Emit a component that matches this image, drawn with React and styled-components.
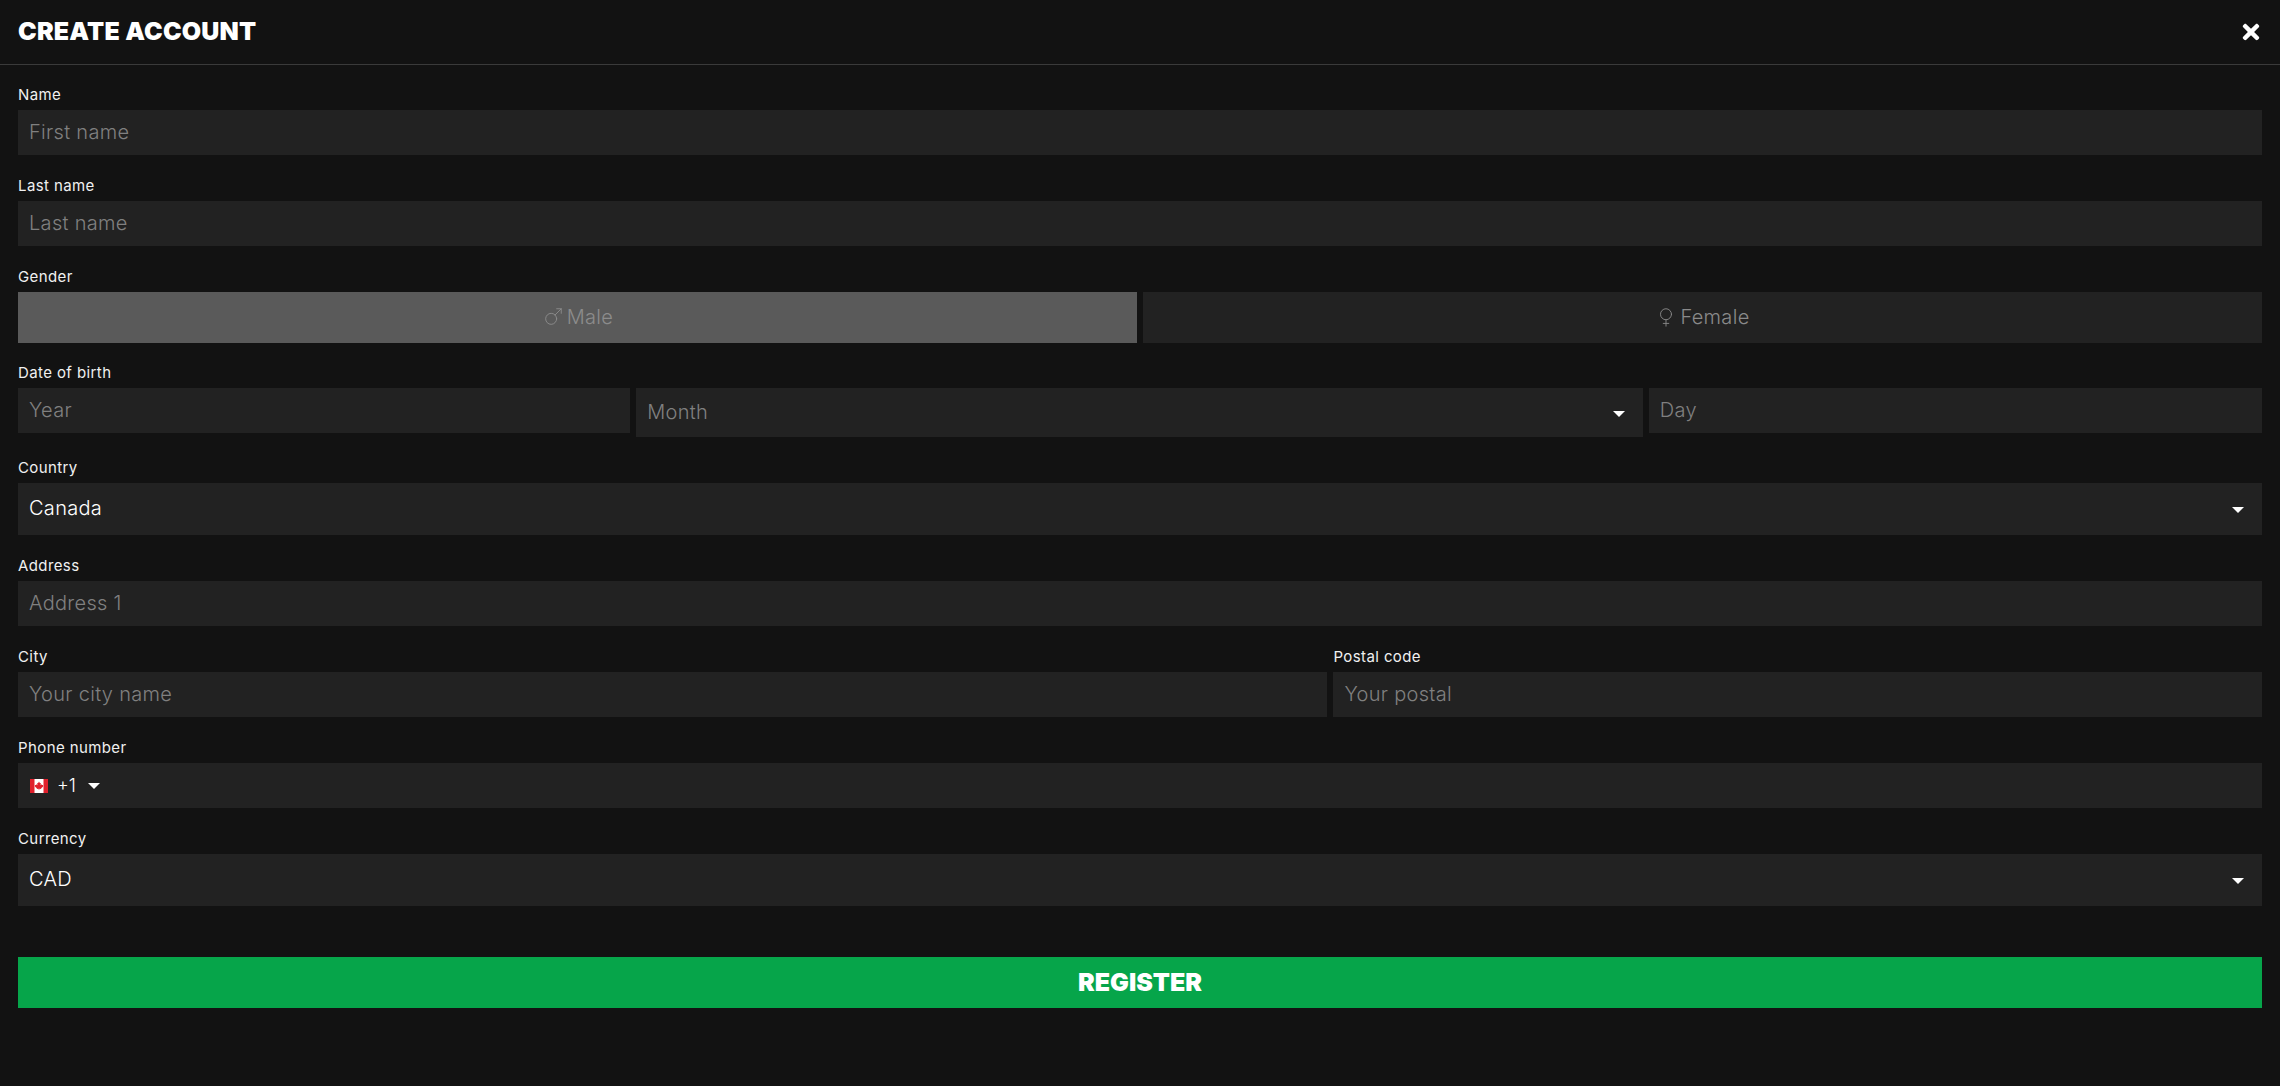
import { Mars, Venus } from "lucide-react";
import { FaTimes } from "react-icons/fa";
import styled, { createGlobalStyle } from "styled-components";

const GlobalStyle = createGlobalStyle`
  html, body {
    margin: 0;
    background: #121212;
    font-family: Inter, "Open Sans", sans-serif;
  }
  * {
    box-sizing: border-box;
  }
`;

const Page = styled.div`
  min-height: 1086px;
  background: #121212;
  color: #fff;
`;

const Header = styled.header`
  height: 65px;
  padding: 0 18px;
  display: flex;
  align-items: center;
  justify-content: space-between;
  border-bottom: 1px solid #3a3a3a;
`;

const Title = styled.h1`
  margin: 0 0 1px;
  font-size: 25px;
  font-weight: 900;
  line-height: 1;
  letter-spacing: 0.2px;
  text-transform: uppercase;
`;

const Close = styled.button`
  padding: 0;
  margin: 0 -1px 1px 0;
  border: 0;
  background: none;
  color: #fff;
  display: flex;
  font-size: 24px;
`;

const Form = styled.form`
  padding: 21px 18px 0;
`;

const Row = styled.div`
  display: flex;
  gap: 6px;
  align-items: flex-start;
`;

const Field = styled.div`
  flex: ${(props) => props.$flex || 1} 1 0;
  min-width: 0;
  margin-bottom: ${(props) => props.$gap || 22}px;
`;

const Label = styled.label`
  display: block;
  height: 16px;
  margin-bottom: 8px;
  font-size: 15px;
  font-weight: 400;
  line-height: 18px;
  letter-spacing: 0.4px;
  color: #f0f0f0;
`;

const Input = styled.input`
  display: block;
  width: 100%;
  height: 45px;
  padding: 0 10px 1px 11px;
  border: 0;
  outline: 0;
  background: #222;
  color: #fff;
  font-family: inherit;
  font-size: 20px;
  font-weight: 300;
  letter-spacing: 0.3px;
  &::placeholder {
    color: #808080;
    opacity: 1;
  }
`;

const SelectWrap = styled.div`
  position: relative;
`;

const Select = styled.select`
  display: block;
  width: 100%;
  height: ${(props) => props.$height}px;
  padding: 0 10px 2px 11px;
  border: 0;
  outline: 0;
  appearance: none;
  background: #222;
  color: ${(props) => (props.$muted ? "#808080" : "#fff")};
  font-family: inherit;
  font-size: 20px;
  font-weight: 300;
  letter-spacing: 0.3px;
`;

const Caret = styled.span`
  width: 0;
  height: 0;
  border-left: 6px solid transparent;
  border-right: 6px solid transparent;
  border-top: 6px solid #fff;
  ${(props) =>
    props.$overlay &&
    `
    position: absolute;
    right: 18px;
    top: 50%;
    margin-top: -2px;
    pointer-events: none;
  `}
`;

const GenderGroup = styled.div`
  display: flex;
  gap: 6px;
`;

const GenderButton = styled.button`
  flex: 1;
  height: 51px;
  padding: 0 0 1px;
  border: 0;
  background: ${(props) => (props.$active ? "#5a5a5a" : "#222")};
  color: ${(props) => (props.$active ? "#8c8c8c" : "#8a8a8a")};
  display: flex;
  align-items: center;
  justify-content: center;
  gap: 3px;
  font-family: inherit;
  font-size: 20px;
  font-weight: 300;
  letter-spacing: 0.3px;
`;

const PhoneBox = styled.div`
  height: 45px;
  padding: 0 12px;
  background: #222;
  display: flex;
  align-items: center;
`;

const Flag = styled.svg`
  width: 18px;
  height: 14px;
  margin-right: 9px;
`;

const DialCode = styled.span`
  margin-right: 12px;
  font-size: 18px;
  font-weight: 300;
`;

const Register = styled.button`
  display: block;
  width: 100%;
  height: 51px;
  margin-top: 51px;
  padding: 0 0 2px;
  border: 0;
  background: #06a54a;
  color: #fff;
  font-family: inherit;
  font-size: 25px;
  font-weight: 900;
  text-transform: uppercase;
`;

const CanadaFlag = () => (
  <Flag viewBox="0 0 18 14">
    <rect width="18" height="14" rx="1" fill="#fff" />
    <rect width="4.5" height="14" fill="#e0202c" />
    <rect x="13.5" width="4.5" height="14" fill="#e0202c" />
    <path
      d="M9 2.6l1 1.7.9-.4-.4 2.3 1.2-.9.3.8 1.2-.2-.4 1.3.5.3-2.2 1.7.2.8-2-.2V11h-.6V9.800l-2 .2.2-.8L4.700 7.500l.5-.3-.4-1.300 1.200.2.300-.8 1.200.9-.4-2.300.9.4z"
      fill="#e0202c"
    />
  </Flag>
);

const TextField = ({ label, placeholder, flex }) => (
  <Field $flex={flex}>
    <Label>{label}</Label>
    <Input placeholder={placeholder} />
  </Field>
);

const App = () => {
  return (
    <Page>
      <GlobalStyle />
      <Header>
        <Title>Create account</Title>
        <Close type="button" aria-label="Close">
          <FaTimes />
        </Close>
      </Header>
      <Form>
        <TextField label="Name" placeholder="First name" />
        <TextField label="Last name" placeholder="Last name" />
        <Field $gap={21}>
          <Label>Gender</Label>
          <GenderGroup>
            <GenderButton type="button" $active>
              <Mars size={22} strokeWidth={1} />
              Male
            </GenderButton>
            <GenderButton type="button">
              <Venus size={22} strokeWidth={1} />
              Female
            </GenderButton>
          </GenderGroup>
        </Field>
        <Row>
          <Field $flex={612}>
            <Label>Date of birth</Label>
            <Input placeholder="Year" />
          </Field>
          <Field $flex={1006}>
            <Label>&nbsp;</Label>
            <SelectWrap>
              <Select $height={49} $muted defaultValue="">
                <option value="">Month</option>
              </Select>
              <Caret $overlay />
            </SelectWrap>
          </Field>
          <Field $flex={613}>
            <Label>&nbsp;</Label>
            <Input placeholder="Day" />
          </Field>
        </Row>
        <Field>
          <Label>Country</Label>
          <SelectWrap>
            <Select $height={52}>
              <option>Canada</option>
            </Select>
            <Caret $overlay />
          </SelectWrap>
        </Field>
        <TextField label="Address" placeholder="Address 1" />
        <Row>
          <TextField label="City" placeholder="Your city name" flex={1310} />
          <TextField label="Postal code" placeholder="Your postal" flex={929} />
        </Row>
        <Field>
          <Label>Phone number</Label>
          <PhoneBox>
            <CanadaFlag />
            <DialCode>+1</DialCode>
            <Caret />
          </PhoneBox>
        </Field>
        <Field>
          <Label>Currency</Label>
          <SelectWrap>
            <Select $height={52}>
              <option>CAD</option>
            </Select>
            <Caret $overlay />
          </SelectWrap>
        </Field>
        <Register type="button">Register</Register>
      </Form>
    </Page>
  );
};

export default App;
